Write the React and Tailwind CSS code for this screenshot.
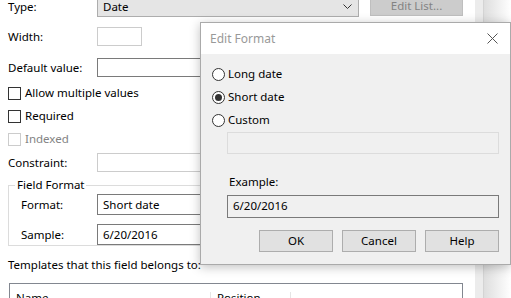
import React from 'react';

const Check = ({ label, disabled }) => (
  <div className="flex h-[14px] items-center">
    <span
      className={`mr-[4px] h-[13px] w-[13px] border bg-white ${
        disabled ? 'border-[#cccccc]' : 'border-[#333333]'
      }`}
    />
    <span className={disabled ? 'text-[#838383]' : ''}>{label}</span>
  </div>
);

const Radio = ({ label, checked }) => (
  <div className="flex h-[14px] items-center">
    <span className="mr-[3px] flex h-[13px] w-[13px] items-center justify-center rounded-full border border-[#333333] bg-white">
      {checked && <span className="h-[7px] w-[7px] rounded-full bg-[#333333]" />}
    </span>
    <span>{label}</span>
  </div>
);

const Btn = ({ children }) => (
  <div className="flex h-[22px] w-[74px] items-center justify-center border border-[#adadad] bg-[#e1e1e1]">
    {children}
  </div>
);

export default function App() {
  return (
    <div
      className="relative flex h-[298px] w-[511px] overflow-hidden bg-white text-[11.5px] leading-none text-black"
      style={{ fontFamily: '"Noto Sans", "Segoe UI", sans-serif' }}
    >
      {/* Form behind the dialog */}
      <div className="flex w-[475px] flex-col pl-[8px]">
        <div className="-mt-[4px] flex h-[21px] items-center">
          <span className="w-[89px]">Type:</span>
          <div className="flex h-[21px] w-[262px] items-center justify-between border border-[#adadad] bg-[#e5e5e5] pl-[5px] pr-[6px]">
            <span>Date</span>
            <svg width="9" height="6" viewBox="0 0 9 6">
              <path d="M0.5 0.5 L4.5 4.5 L8.5 0.5" fill="none" stroke="#333" strokeWidth="1" />
            </svg>
          </div>
          <div className="ml-[11px] flex h-[20px] w-[93px] items-center justify-center self-start border border-[#bfbfbf] bg-[#cccccc] text-[#838383]">
            Edit List...
          </div>
        </div>

        <div className="mt-[10px] flex h-[19px] items-center">
          <span className="w-[89px]">Width:</span>
          <div className="h-[19px] w-[45px] border border-[#cccccc]" />
        </div>

        <div className="mt-[12px] flex h-[19px] items-center">
          <span className="w-[89px]">Default value:</span>
          <div className="h-[19px] w-[366px] border border-[#7a7a7a]" />
        </div>

        <div className="mt-[9px] flex flex-col gap-[9px]">
          <Check label="Allow multiple values" />
          <Check label="Required" />
          <Check label="Indexed" disabled />
        </div>

        <div className="mt-[7px] flex h-[19px] items-center">
          <span className="w-[89px]">Constraint:</span>
          <div className="h-[19px] w-[366px] border border-[#cccccc]" />
        </div>

        <div className="relative mt-[13px] h-[63px] w-[455px] border border-[#dcdcdc] pl-[12px] pt-[8px]">
          <span className="absolute -top-[7px] left-[6px] bg-white px-[2px]">Field Format</span>
          <div className="flex h-[21px] items-center">
            <span className="w-[76px]">Format:</span>
            <div className="flex h-[21px] w-[350px] items-center border border-[#7a7a7a] pl-[5px]">Short date</div>
          </div>
          <div className="mt-[9px] flex h-[21px] items-center">
            <span className="w-[76px]">Sample:</span>
            <div className="flex h-[21px] w-[350px] items-center border border-[#7a7a7a] pl-[5px]">6/20/2016</div>
          </div>
        </div>

        <div className="mt-[13px]">Templates that this field belongs to:</div>

        <div className="ml-[1px] mt-[12px] flex h-[30px] w-[454px] border border-[#828790] pt-[8px]">
          <span className="w-[201px] border-r border-[#e5e5e5] pl-[6px]">Name</span>
          <span className="w-[80px] border-r border-[#e5e5e5] pl-[6px]">Position</span>
        </div>
      </div>

      <div className="w-[9px] border-r border-[#d4d4d4] bg-[#ececec]" />
      <div className="flex-1 bg-gradient-to-r from-[#dedede] to-white" />

      {/* Edit Format dialog */}
      <div className="absolute left-[200px] top-[22px] flex h-[243px] w-[311px] flex-col border border-[#aaaaaa] bg-[#f0f0f0] shadow-[0_2px_10px_rgba(0,0,0,0.25)]">
        <div className="flex h-[31px] items-center justify-between bg-white pl-[9px] pr-[12px]">
          <span className="text-[12px] text-[#999999]">Edit Format</span>
          <svg width="11" height="11" viewBox="0 0 11 11">
            <path d="M0.5 0.5 L10.5 10.5 M10.5 0.5 L0.5 10.5" stroke="#555" strokeWidth="1" />
          </svg>
        </div>
        <div className="flex flex-col pl-[11px] pt-[13px]">
          <div className="flex flex-col gap-[9px]">
            <Radio label="Long date" />
            <Radio label="Short date" checked />
            <Radio label="Custom" />
          </div>
          <div className="ml-[15px] mt-[5px] h-[22px] w-[272px] border border-[#dcdcdc]" />
          <div className="ml-[17px] mt-[22px]">Example:</div>
          <div className="ml-[15px] mt-[7px] flex h-[23px] w-[272px] items-center border border-[#7a7a7a] pl-[5px]">
            6/20/2016
          </div>
          <div className="ml-[47px] mt-[12px] flex gap-[9px]">
            <Btn>OK</Btn>
            <Btn>Cancel</Btn>
            <Btn>Help</Btn>
          </div>
        </div>
      </div>
    </div>
  );
}
